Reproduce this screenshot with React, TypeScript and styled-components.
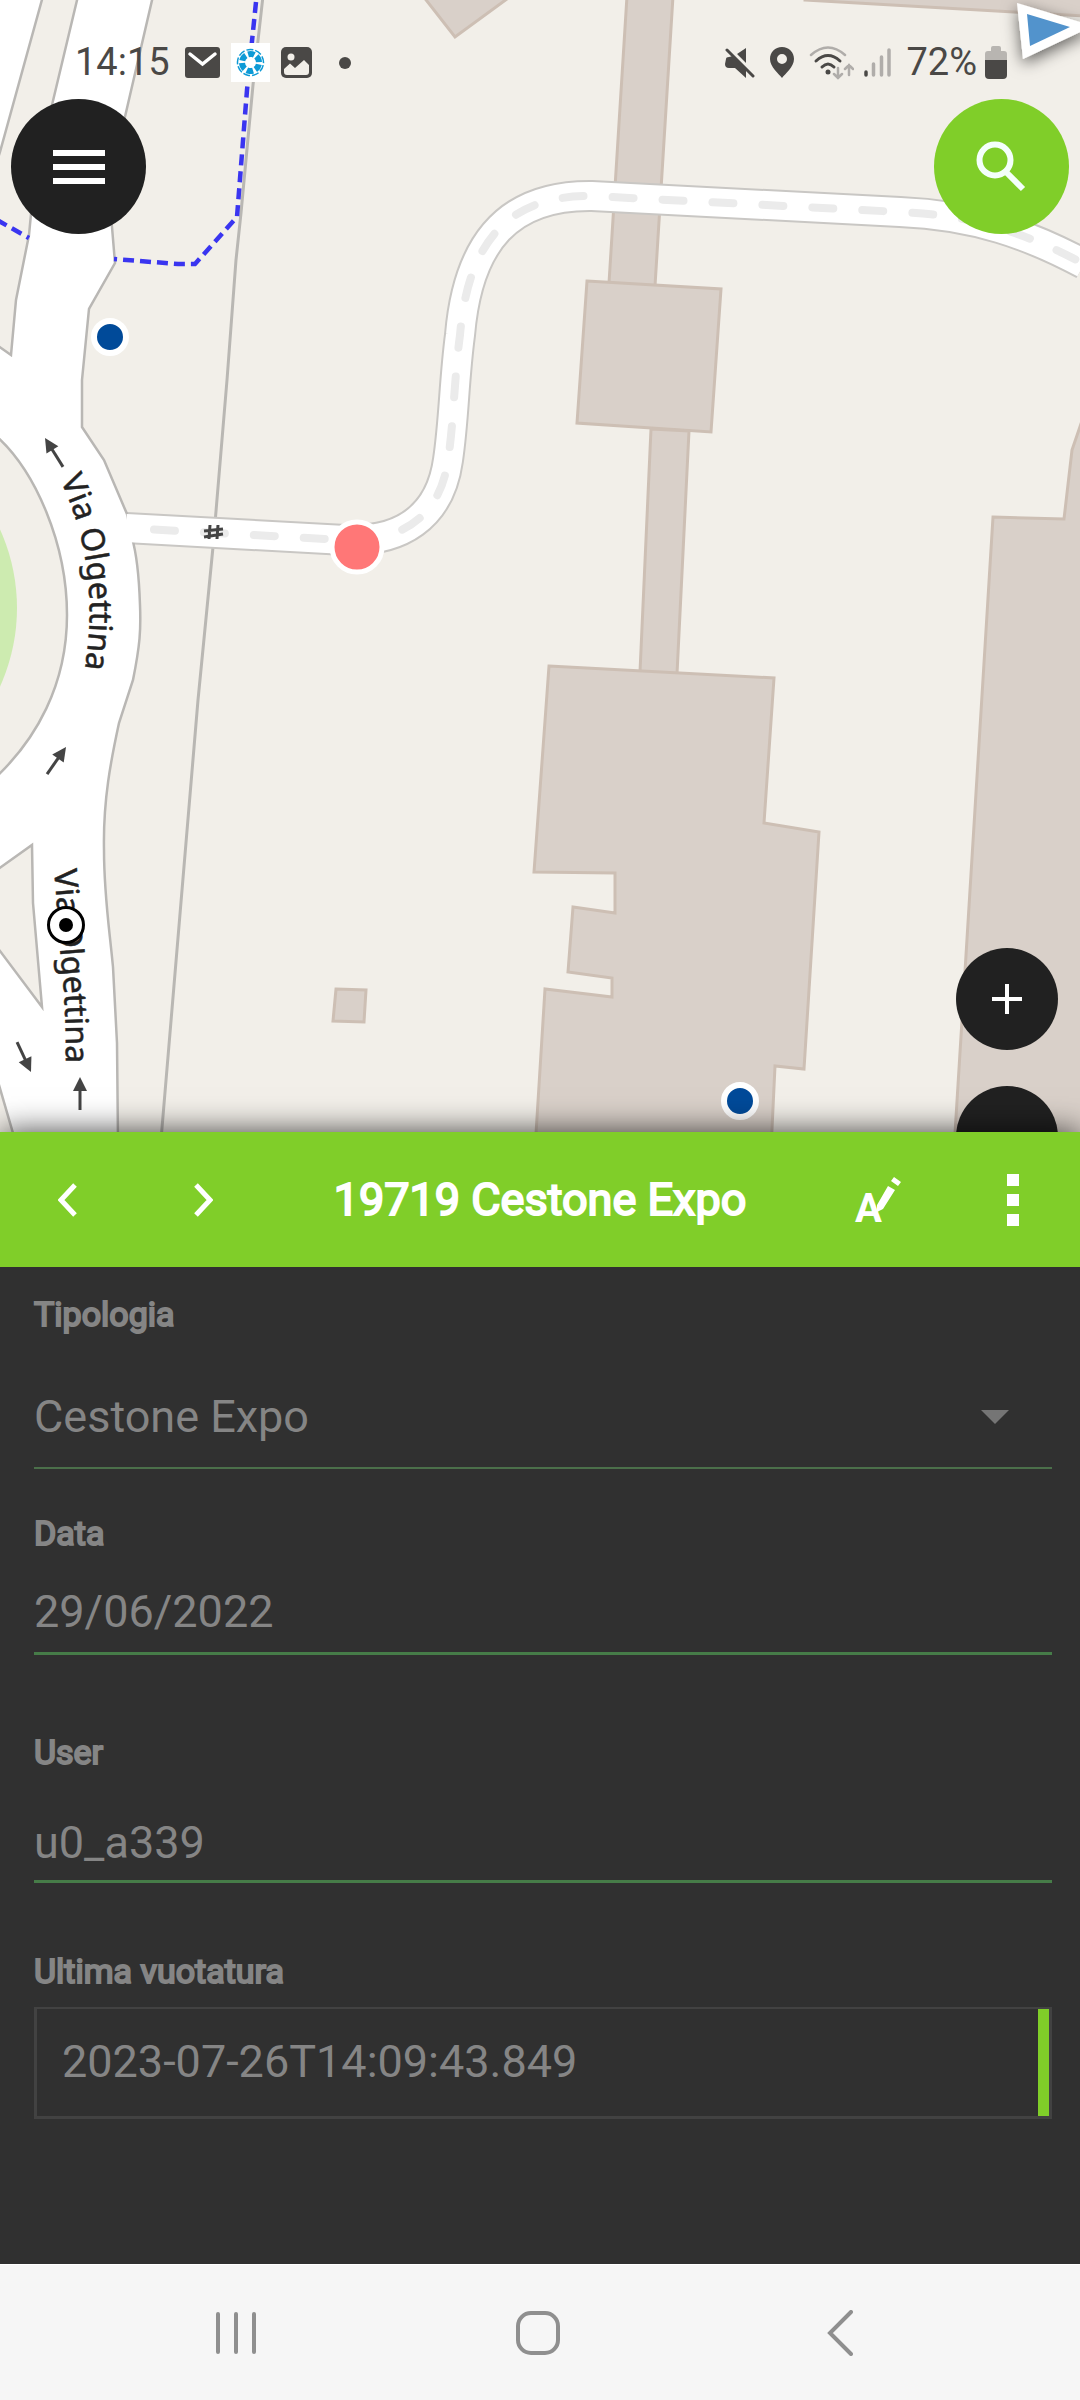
import React from 'react';
import styled, { createGlobalStyle } from 'styled-components';

const GREEN = '#80ce29';
const DARK = '#212121';
const INK = '#4a4846';
const MUTED = '#858585';

const GlobalStyle = createGlobalStyle`
  * { box-sizing: border-box; }
  body {
    margin: 0;
    background: #303030;
    font-family: Roboto, 'Noto Sans', sans-serif;
  }
  button { border: 0; padding: 0; background: none; cursor: pointer; }
  svg { display: block; flex: none; }
`;

const Screen = styled.div`
  display: flex;
  flex-direction: column;
  min-height: 100vh;
`;

const MapView = styled.main`
  position: relative;
  flex: 1 1 0;
  overflow: hidden;
  background: #f2efe9;
`;

const MapCanvas = styled.svg`
  position: absolute;
  inset: 0;
  width: 100%;
  height: 100%;
`;

const StatusBar = styled.header`
  position: relative;
  display: flex;
  justify-content: space-between;
  padding: 43px 73px 0 75px;
  color: ${INK};
  font-size: 38px;
  line-height: 39px;
`;

const StatusGroup = styled.div<{ $gap: number }>`
  display: flex;
  align-items: center;
  gap: ${(p) => p.$gap}px;
`;

const Reading = styled.span`
  padding-right: 4px;
`;

const MapToolbar = styled.div`
  position: relative;
  display: flex;
  justify-content: space-between;
  padding: 17px 11px;
`;

const RoundButton = styled.button<{ $size: number; $color: string }>`
  display: flex;
  align-items: center;
  justify-content: center;
  width: ${(p) => p.$size}px;
  height: ${(p) => p.$size}px;
  border-radius: 50%;
  background: ${(p) => p.$color};
`;

const ZoomControls = styled.div`
  position: absolute;
  right: 22px;
  bottom: -56px;
  display: flex;
  flex-direction: column;
  gap: 36px;
`;

const Sheet = styled.section`
  position: relative;
  flex: 1 1 0;
  background: #303030;
  box-shadow: 0 0 30px rgba(0, 0, 0, 0.75);
`;

const SheetHeader = styled.header`
  display: flex;
  align-items: stretch;
  height: 135px;
  background: ${GREEN};
`;

const HeaderButton = styled.button`
  display: flex;
  flex: none;
  align-items: center;
  justify-content: center;
  width: 135px;
`;

const Title = styled.h1`
  flex: 1;
  margin: 0;
  color: #fff;
  font-size: 45px;
  font-weight: 400;
  line-height: 135px;
  text-align: center;
  white-space: nowrap;
  -webkit-text-stroke: 2px #fff;
`;

const Form = styled.form`
  padding: 27px 28px 0 34px;
`;

const Field = styled.div`
  display: flex;
  flex-direction: column;
  min-height: 219px;
`;

const FieldLabel = styled.label<{ $gap: number }>`
  margin-bottom: ${(p) => p.$gap}px;
  color: ${MUTED};
  font-size: 34px;
  line-height: 40px;
  -webkit-text-stroke: 2px ${MUTED};
`;

const SelectWrap = styled.div`
  position: relative;
`;

const Select = styled.select`
  display: block;
  width: 100%;
  height: 102px;
  padding: 0 0 2px;
  border: 0;
  border-bottom: 2px solid #4b6f4a;
  border-radius: 0;
  outline: 0;
  appearance: none;
  background: transparent;
  color: ${MUTED};
  font: 45px Roboto, sans-serif;
`;

const Caret = styled.svg`
  position: absolute;
  right: 43px;
  top: 43px;
  pointer-events: none;
`;

const LineInput = styled.input<{ $height: number }>`
  width: 100%;
  height: ${(p) => p.$height}px;
  padding: 0 0 2px;
  border: 0;
  border-bottom: 3px solid #467c48;
  border-radius: 0;
  outline: 0;
  background: transparent;
  color: ${MUTED};
  font: 45px Roboto, sans-serif;
`;

const Boxed = styled.div`
  display: flex;
  height: 112px;
  border: 3px solid #424242;
  border-top-width: 2px;
`;

const BoxedInput = styled.input`
  flex: 1;
  min-width: 0;
  padding: 0 25px 2px;
  border: 0;
  outline: 0;
  background: transparent;
  color: ${MUTED};
  font: 45px Roboto, sans-serif;
`;

const Accent = styled.span`
  width: 11px;
  background: ${GREEN};
`;

const NavBar = styled.nav`
  position: relative;
  display: grid;
  grid-template-columns: repeat(3, 1fr);
  height: 136px;
  padding: 0 89px 0 85px;
  border-top: 1px solid #fff;
  background: #f6f6f6;
`;

const NavButton = styled.button`
  display: flex;
  align-items: center;
  justify-content: center;
`;

const BUILDINGS = [
  '423,-4 455,37 511,-4',
  '627,-4 673,-4 655,286 609,283',
  '587,281 721,289 711,432 577,423',
  '651,429 689,431 677,674 640,672',
  '549,666 774,678 764,823 819,832 804,1069 775,1066 771,1150 535,1150 545,989 612,997 612,978 568,972 573,907 615,913 615,873 534,872',
  '993,517 1064,519 1072,450 1084,415 1084,1150 954,1150',
  '336,989 366,990 364,1022 333,1021',
  '805,0 1084,16 1084,-4 805,-4',
];

const SERVICE_ROAD =
  'M126 528 L345 540 C400 542 440 518 448 460 C454 420 454 380 460 335 C468 240 510 195 592 196 L900 212 C975 215 1030 235 1084 264';

function RoadArrow({ x, y, angle, length }: { x: number; y: number; angle: number; length: number }) {
  return (
    <g transform={`translate(${x} ${y}) rotate(${angle})`} fill="#444">
      <path d="M0 0 L-7 14 L7 14 Z" />
      <rect x="-1.5" y="12" width="3" height={length - 12} />
    </g>
  );
}

function Marker({ x, y }: { x: number; y: number }) {
  return <circle cx={x} cy={y} r="16" fill="#004a99" stroke="#fff" strokeWidth="6" />;
}

function StreetMap() {
  return (
    <MapCanvas viewBox="0 0 1080 1132" preserveAspectRatio="xMidYMin slice" role="img" aria-label="Map">
      <defs>
        <path id="label-north" d="M60 480 C76 512 86 550 89 590 C91 625 88 655 80 700" />
        <path id="label-south" d="M54 870 C57 900 59 940 62 970 C66 1010 66 1040 66 1100" />
        <filter id="pointer-shadow" x="-50%" y="-50%" width="200%" height="200%">
          <feDropShadow dx="0" dy="5" stdDeviation="8" floodColor="#000" floodOpacity="0.6" />
        </filter>
      </defs>

      <g fill="#d9d0c9" stroke="#cdbfb4" strokeWidth="3">
        {BUILDINGS.map((points) => (
          <polygon key={points} points={points} />
        ))}
      </g>

      <path
        d="M263 -4 L253 85 L241 213 L236 260 L227 380 L213 547 L198 700 L161 1140"
        fill="none"
        stroke="#b9b7b3"
        strokeWidth="3"
      />

      <path d={SERVICE_ROAD} fill="none" stroke="#c9c7c4" strokeWidth="32" />

      <g fill="#fff" stroke="#b9b7b4" strokeWidth="2.5">
        <path d="M43 -4 L0 152 L-6 170 L-6 -4 Z" />
        <path
          d="M78 -4 L52 105 C38 150 33 190 29 235 L16 300 L11 355 L-6 343 L-6 434 C36 470 67 545 67 615
             C67 685 36 740 -6 779 L-6 872 L32 845 L33 903 L42 1007 L-6 943 L-6 1068 L15 1140 L118 1140
             L117 1043 L113 967 C109 925 104 895 104 850 C103 800 111 760 119 723 L133 680
             C140 645 141 630 140 605 C139 575 137 555 132 538 L127 514 L104 460 L82 427 L82 380
             L89 309 L115 263 L112 227 L108 190 L153 -4 Z"
        />
      </g>
      <path d={SERVICE_ROAD} fill="none" stroke="#fff" strokeWidth="28" />
      <path
        d={SERVICE_ROAD}
        fill="none"
        stroke="#ebebeb"
        strokeWidth="8"
        strokeLinecap="round"
        strokeDasharray="21 29"
        strokeDashoffset="-28"
      />

      <circle cx="-173" cy="608" r="190" fill="#cdebb0" />

      <g fill="none" stroke="#3a35f0" strokeWidth="4.5" strokeDasharray="11 6">
        <path d="M256 2 L247 90 L237 217 L195 264 L178 264 L114 259" />
        <path d="M-3 220 L29 238" />
      </g>

      <path
        d="M210 525 L209 539 M218 525 L217 539 M204 531 L223 529 M204 537 L223 534"
        stroke="#444"
        strokeWidth="3"
      />

      <RoadArrow x={45} y={438} angle={-32} length={34} />
      <RoadArrow x={66} y={747} angle={35} length={33} />
      <RoadArrow x={31} y={1072} angle={155} length={33} />
      <RoadArrow x={80} y={1077} angle={0} length={33} />

      <g fill="#222" stroke="#222" strokeWidth="0.5" fontFamily="'Noto Sans', sans-serif" fontSize="32">
        <text>
          <textPath href="#label-north">Via Olgettina</textPath>
        </text>
        <text>
          <textPath href="#label-south">Via Olgettina</textPath>
        </text>
      </g>

      <Marker x={110} y={337} />
      <Marker x={740} y={1101} />
      <circle cx="357" cy="547" r="25" fill="#ff7777" stroke="#fff" strokeWidth="5" />
      <circle cx="66" cy="925" r="17.5" fill="#fff" stroke="#000" strokeWidth="3" />
      <circle cx="66" cy="925" r="7" fill="#000" />

      <g filter="url(#pointer-shadow)">
        <polygon points="1017,3 1023,59 1093,26" fill="#fff" />
      </g>
      <polygon points="1027,14 1030,46 1070,27" fill="#5293cc" />
    </MapCanvas>
  );
}

function LeftStatusIcons() {
  return (
    <>
      <svg width="35" height="31" viewBox="0 0 35 31">
        <rect width="35" height="31" rx="3" fill={INK} />
        <path d="M5 7 L17.5 17 L30 7" fill="none" stroke="#fff" strokeWidth="3.5" strokeLinecap="round" />
      </svg>
      <svg width="39" height="39" viewBox="0 0 39 39">
        <rect width="39" height="39" fill="#fff" />
        <g fill="none" stroke="#0d9ad6" transform="rotate(12 19.5 19.5)">
          <circle cx="19.5" cy="19.5" r="13" strokeWidth="1.5" strokeDasharray="7 2" />
          <circle cx="19.5" cy="19.5" r="8.5" strokeWidth="6" strokeDasharray="6.4 2.5" />
        </g>
      </svg>
      <svg width="31" height="31" viewBox="0 0 31 31">
        <rect width="31" height="31" rx="5" fill={INK} />
        <circle cx="10" cy="10" r="3.5" fill="#f2efe9" />
        <path d="M3 22 L9 16.5 L14 21 L23 13 L28 18 V25 Q28 28 25 28 H6 Q3 28 3 25 Z" fill="#f2efe9" />
      </svg>
    </>
  );
}

function RightStatusIcons() {
  return (
    <>
      <svg width="30" height="31" viewBox="0 0 30 31" fill={INK}>
        <path d="M12 7 L21 1 V16 Z M1 12 Q1 10 4 10 L8 9 L21 23 V31 L10 21 H4 Q0 21 0 17 Z" />
        <path d="M4 1 L30 27" stroke="#f2efe9" strokeWidth="2" />
        <path d="M2 3 L28 29" stroke={INK} strokeWidth="3" strokeLinecap="round" />
      </svg>
      <svg width="24" height="31" viewBox="0 0 24 31">
        <path
          fillRule="evenodd"
          fill={INK}
          d="M12 0 C5 0 0 5 0 12 C0 20 9 27 12 31 C15 27 24 20 24 12 C24 5 19 0 12 0 Z M12 7 A5 5 0 1 1 12 17 A5 5 0 1 1 12 7 Z"
        />
      </svg>
      <StatusGroup $gap={10}>
        <svg width="45" height="34" viewBox="0 0 45 34" fill="none" strokeWidth="2.5" strokeLinecap="round">
          <path d="M2 9 Q19 -6 36 9" stroke="#b0adaa" />
          <path d="M7 15 Q19 4 31 15" stroke={INK} strokeWidth="3" />
          <path d="M13 21 Q19 15 25 21" stroke={INK} strokeWidth="3" />
          <circle cx="19" cy="26" r="2.5" fill={INK} />
          <path d="M29 22 V32 M25 28 L29 32 L33 28 M40 29 V19 M36 23 L40 19 L44 23" stroke="#b0adaa" />
        </svg>
        <svg width="27" height="31" viewBox="0 0 27 31" strokeWidth="3.5" strokeLinecap="round">
          <path d="M2 25 V28" stroke={INK} />
          <path d="M9.5 17 V28 M17.5 10 V28 M25 3 V28" stroke="#b0adaa" />
        </svg>
      </StatusGroup>
    </>
  );
}

function BatteryIcon() {
  return (
    <svg width="22" height="33" viewBox="0 0 22 33">
      <path d="M0 15 V8 Q0 5 3 5 H6 V2 Q6 0 8 0 H14 Q16 0 16 2 V5 H19 Q22 5 22 8 V15 Z" fill="#b8b5b1" />
      <path d="M0 14 H22 V29 Q22 33 18 33 H4 Q0 33 0 29 Z" fill={INK} />
    </svg>
  );
}

export default function App() {
  return (
    <Screen>
      <GlobalStyle />
      <MapView>
        <StreetMap />
        <StatusBar>
          <StatusGroup $gap={11}>
            <Reading>14:15</Reading>
            <LeftStatusIcons />
            <svg width="44" height="12" viewBox="0 0 44 12">
              <circle cx="22" cy="6" r="6" fill={INK} />
            </svg>
          </StatusGroup>
          <StatusGroup $gap={15}>
            <RightStatusIcons />
            <StatusGroup $gap={8}>
              72%
              <BatteryIcon />
            </StatusGroup>
          </StatusGroup>
        </StatusBar>
        <MapToolbar>
          <RoundButton type="button" $size={135} $color={DARK} aria-label="Menu">
            <svg width="52" height="36" viewBox="0 0 52 36" fill="#fff">
              <rect y="1" width="52" height="6" />
              <rect y="15" width="52" height="6" />
              <rect y="29" width="52" height="6" />
            </svg>
          </RoundButton>
          <RoundButton type="button" $size={135} $color={GREEN} aria-label="Search">
            <svg width="52" height="52" viewBox="0 0 52 52" fill="none" stroke="#f4fffb" strokeWidth="6">
              <circle cx="19" cy="19" r="15.5" />
              <path d="M30 31 L47 48" />
            </svg>
          </RoundButton>
        </MapToolbar>
        <ZoomControls>
          <RoundButton type="button" $size={102} $color={DARK} aria-label="Zoom in">
            <svg width="30" height="30" viewBox="0 0 30 30" stroke="#fff" strokeWidth="4">
              <path d="M15 0 V30 M0 15 H30" />
            </svg>
          </RoundButton>
          <RoundButton type="button" $size={102} $color={DARK} aria-label="Zoom out">
            <svg width="30" height="30" viewBox="0 0 30 30" stroke="#fff" strokeWidth="4">
              <path d="M0 15 H30" />
            </svg>
          </RoundButton>
        </ZoomControls>
      </MapView>

      <Sheet>
        <SheetHeader>
          <HeaderButton type="button" aria-label="Previous feature">
            <svg width="20" height="34" viewBox="0 0 20 34" fill="none" stroke="#fff" strokeWidth="5">
              <path d="M17 2 L3 17 L17 32" />
            </svg>
          </HeaderButton>
          <HeaderButton type="button" aria-label="Next feature">
            <svg width="20" height="34" viewBox="0 0 20 34" fill="none" stroke="#fff" strokeWidth="5">
              <path d="M3 2 L17 17 L3 32" />
            </svg>
          </HeaderButton>
          <Title>19719 Cestone Expo</Title>
          <HeaderButton type="button" aria-label="Edit attributes">
            <svg width="66" height="80" viewBox="-10 -16 66 80" fill="#fff">
              <text x="0" y="46" fontFamily="Roboto, sans-serif" fontSize="40" fontWeight="700">
                A
              </text>
              <path d="M33 10 L40 14 L28 33 L22 36 L22 29 Z M36 5 L39 1 L46 6 L43 10 Z" />
            </svg>
          </HeaderButton>
          <HeaderButton type="button" aria-label="More options">
            <svg width="12" height="52" viewBox="0 0 12 52" fill="#fff">
              <rect width="12" height="12" />
              <rect y="20" width="12" height="12" />
              <rect y="40" width="12" height="12" />
            </svg>
          </HeaderButton>
        </SheetHeader>

        <Form>
          <Field>
            <FieldLabel htmlFor="tipologia" $gap={33}>Tipologia</FieldLabel>
            <SelectWrap>
              <Select id="tipologia" defaultValue="Cestone Expo">
                <option>Cestone Expo</option>
              </Select>
              <Caret width="28" height="14" viewBox="0 0 28 14">
                <path d="M0 0 H28 L14 14 Z" fill="#757575" />
              </Caret>
            </SelectWrap>
          </Field>
          <Field>
            <FieldLabel htmlFor="data" $gap={19}>Data</FieldLabel>
            <LineInput id="data" $height={83} defaultValue="29/06/2022" />
          </Field>
          <Field>
            <FieldLabel htmlFor="user" $gap={34}>User</FieldLabel>
            <LineInput id="user" $height={77} defaultValue="u0_a339" />
          </Field>
          <Field>
            <FieldLabel htmlFor="ultima" $gap={16}>Ultima vuotatura</FieldLabel>
            <Boxed>
              <BoxedInput id="ultima" defaultValue="2023-07-26T14:09:43.849" />
              <Accent />
            </Boxed>
          </Field>
        </Form>
      </Sheet>

      <NavBar>
        <NavButton type="button" aria-label="Recent apps">
          <svg width="40" height="44" viewBox="0 0 40 44" stroke="#8f8f8f" strokeWidth="4" strokeLinecap="round">
            <path d="M2 3 V41 M20 3 V41 M38 3 V41" />
          </svg>
        </NavButton>
        <NavButton type="button" aria-label="Home">
          <svg width="44" height="44" viewBox="0 0 44 44" fill="none" stroke="#8f8f8f" strokeWidth="4">
            <rect x="2" y="2" width="40" height="40" rx="13" />
          </svg>
        </NavButton>
        <NavButton type="button" aria-label="Back">
          <svg width="26" height="46" viewBox="0 0 26 46" fill="none" stroke="#8f8f8f" strokeWidth="4" strokeLinecap="round">
            <path d="M24 2 L3 23 L24 44" />
          </svg>
        </NavButton>
      </NavBar>
    </Screen>
  );
}
